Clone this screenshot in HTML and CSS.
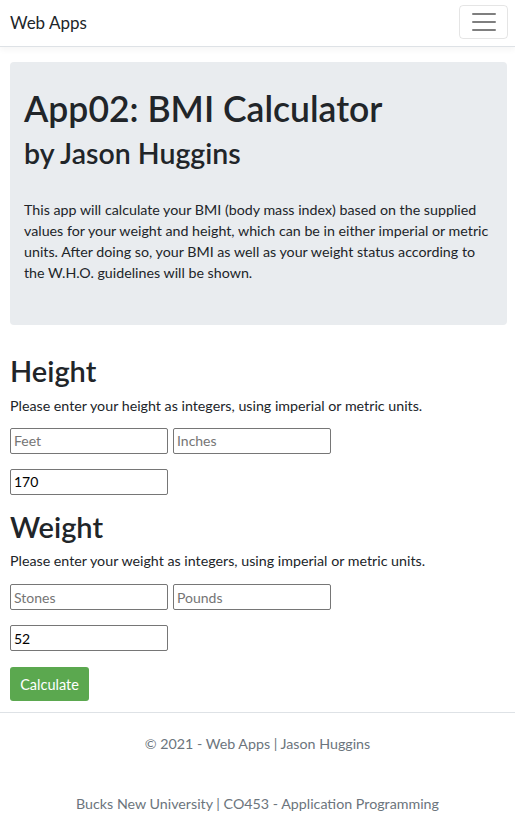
FILE: index.html
```html
<!DOCTYPE html>
<html lang="en">
<head>
<meta charset="utf-8">
<title>BMI Calculator</title>
<link rel="stylesheet" href="styles.css">
</head>
<body>
<header class="navbar">
  <span class="brand">Web Apps</span>
  <button class="toggler" type="button" aria-label="Toggle navigation">
    <svg width="30" height="30" viewBox="0 0 30 30"><path d="M4 7h22M4 15h22M4 23h22" stroke="rgba(0,0,0,0.5)" stroke-width="2" stroke-linecap="round"/></svg>
  </button>
</header>
<main class="container">
  <section class="jumbotron">
    <h1 class="title">App02: BMI Calculator</h1>
    <h3 class="subtitle">by Jason Huggins</h3>
    <p class="lead-text">This app will calculate your BMI (body mass index) based on the supplied values for your weight and height, which can be in either imperial or metric units. After doing so, your BMI as well as your weight status according to the W.H.O. guidelines will be shown.</p>
  </section>
  <section class="group">
    <h2 class="group-title">Height</h2>
    <p class="hint">Please enter your height as integers, using imperial or metric units.</p>
    <div class="row">
      <input class="field" type="text" placeholder="Feet">
      <input class="field" type="text" placeholder="Inches">
    </div>
    <div class="row">
      <input class="field" type="text" value="170">
    </div>
  </section>
  <section class="group">
    <h2 class="group-title">Weight</h2>
    <p class="hint">Please enter your weight as integers, using imperial or metric units.</p>
    <div class="row">
      <input class="field" type="text" placeholder="Stones">
      <input class="field" type="text" placeholder="Pounds">
    </div>
    <div class="row">
      <input class="field" type="text" value="52">
    </div>
  </section>
  <button class="btn-calc" type="button">Calculate</button>
</main>
<footer class="footer">
  <p class="foot-line">© 2021 - Web Apps | Jason Huggins</p>
  <p class="foot-line second">Bucks New University | CO453 - Application Programming</p>
</footer>
</body>
</html>
```
FILE: styles.css
```css
* { box-sizing: border-box; }
html, body { margin: 0; padding: 0; }
body {
  font-family: Lato, "Open Sans", sans-serif;
  font-size: 14.25px;
  line-height: 21px;
  color: #212529;
  background: #fff;
}
.navbar {
  height: 47px;
  display: flex;
  align-items: center;
  justify-content: space-between;
  padding: 0 7px 0 10px;
  border-bottom: 1px solid #dee2e6;
  box-shadow: 0 3px 6px rgba(0,0,0,0.04);
}
.brand {
  font-size: 17px;
  color: #212529;
  margin-top: -2px;
}
.toggler {
  width: 49px;
  height: 34px;
  margin-top: -3px;
  border: 1px solid rgba(0,0,0,0.1);
  border-radius: 4px;
  background: transparent;
  padding: 0;
  display: flex;
  align-items: center;
  justify-content: center;
}
.container {
  padding: 15px 8px 0 10px;
}
.jumbotron {
  background: #e9ecef;
  border-radius: 4px;
  padding: 26px 14px 28px;
  margin-bottom: 29px;
}
.title {
  font-size: 35.5px;
  font-weight: 600;
  line-height: 1.2;
  margin: 0 0 5px;
}
.subtitle {
  font-size: 28.5px;
  font-weight: 600;
  line-height: 1.2;
  margin: 0 0 29px;
}
.lead-text { margin: 0 0 14px; }
.group-title {
  font-size: 29px;
  font-weight: 600;
  line-height: 1.2;
  margin: 0 0 6px;
}
.hint { margin: 0 0 12px; }
.group + .group .hint { margin-bottom: 13px; }
.row {
  display: flex;
  gap: 5px;
  margin-bottom: 15px;
}
.field {
  width: 158px;
  height: 26px;
  border: 1px solid #767676;
  border-radius: 2px;
  padding: 1px 3px;
  font-family: Lato, sans-serif;
  font-size: 14px;
  color: #000;
}
.field::placeholder { color: #757575; }
.btn-calc {
  background: #5ba84f;
  color: #fff;
  border: none;
  border-radius: 3px;
  font-family: Lato, sans-serif;
  font-size: 14.5px;
  height: 34px;
  width: 79px;
  padding: 0;
  margin-top: 1px;
}
.footer {
  margin-top: 11px;
  border-top: 1px solid #dee2e6;
  text-align: center;
  color: #6c757d;
  padding-top: 20px;
}
.foot-line { margin: 0; line-height: 21px; }
.foot-line.second { margin-top: 39px; }
```
